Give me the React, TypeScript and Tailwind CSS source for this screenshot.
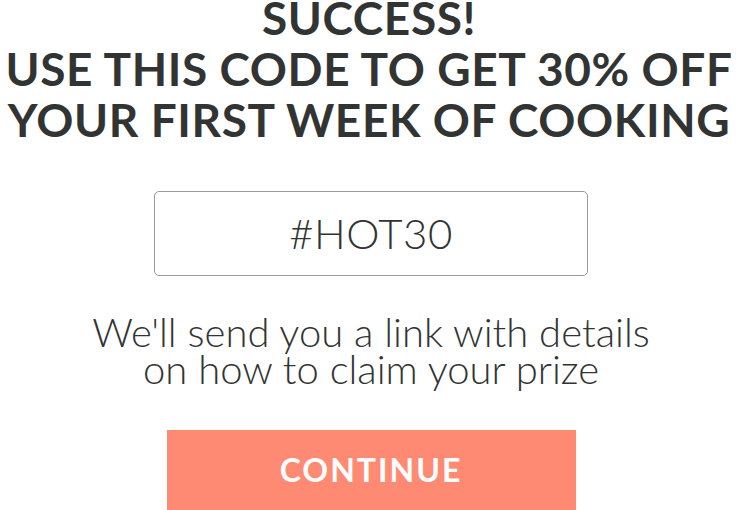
import React from 'react';

export default function App() {
  return (
    <div className="w-[738px] h-[510px] bg-white overflow-hidden flex flex-col items-center text-[#323433] font-['Lato',sans-serif]">
      <h1 className="mt-[-8px] text-center font-bold uppercase text-[46px] leading-[51px] tracking-[0.6px] whitespace-nowrap">
        Success!
        <br />
        Use this code to get 30% off
        <br />
        Your first week of cooking
      </h1>

      <div className="mt-[46px] ml-[4px] w-[434px] h-[85px] border border-[#9a9a9a] rounded-[5px] flex items-center justify-center">
        <span className="text-[42px] font-light tracking-[0.5px]">#HOT30</span>
      </div>

      <p className="mt-[38px] ml-[4px] text-center text-[40px] font-light leading-[37px] whitespace-nowrap">
        We'll send you a link with details
        <br />
        on how to claim your prize
      </p>

      <button className="mt-[42px] ml-[4px] shrink-0 w-[409px] h-[80px] bg-[#ff8a73] text-white font-bold uppercase text-[32px] tracking-[2px] flex items-center justify-center">
        Continue
      </button>
    </div>
  );
}
